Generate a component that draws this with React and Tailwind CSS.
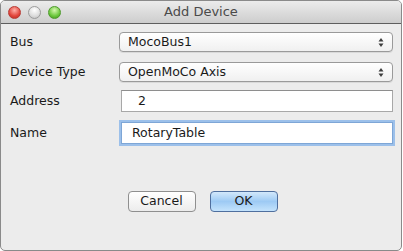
import React from "react";

function Light({ className }) {
    return (
        <div className={"h-[13px] w-[13px] rounded-full border " + className}></div>
    );
}

function Combo({ value }) {
    return (
        <div className="relative flex h-[20px] w-[274px] items-center rounded-[4px] border border-[#9a9a9a] bg-gradient-to-b from-white to-[#f0f0f0] pl-[8px] shadow-[0_1px_0_rgba(0,0,0,0.08)]">
            <span className="text-[12.5px] text-[#1a1a1a]">{value}</span>
            <svg className="absolute right-[8px] top-[4px]" width="6" height="11" viewBox="0 0 6 11">
                <path d="M3 1 L5.5 4.5 L0.5 4.5 Z" fill="#3c3c3c" />
                <path d="M3 10 L5.5 6.5 L0.5 6.5 Z" fill="#3c3c3c" />
            </svg>
        </div>
    );
}

export default function App() {
    return (
        <div className="h-[251px] w-[403px] bg-white" style={{ fontFamily: '"DejaVu Sans", "Liberation Sans", sans-serif' }}>
            <div className="flex h-[251px] w-[402px] flex-col overflow-hidden rounded-[5px] border border-[#8a8a8a] bg-[#ececec]">
                {/* title bar */}
                <div className="relative flex h-[23px] shrink-0 items-center border-b border-[#5e5e5e] bg-gradient-to-b from-[#ececec] to-[#cdcdcd]">
                    <div className="flex items-center gap-[7px] pl-[7px]">
                        <Light className="border-[#b83a33] bg-[radial-gradient(circle_at_50%_30%,#ffb0a8,#e2453b_60%,#b32a22)]" />
                        <Light className="border-[#9c9c9c] bg-[radial-gradient(circle_at_50%_30%,#ffffff,#dcdcdc_60%,#b8b8b8)]" />
                        <Light className="border-[#4c9a2a] bg-[radial-gradient(circle_at_50%_30%,#d6f7b0,#6cc83d_60%,#3f8f1c)]" />
                    </div>
                    <div className="absolute inset-0 flex items-center justify-center text-[13px] text-[#4a4a4a]">
                        Add Device
                    </div>
                </div>

                {/* form */}
                <div className="flex flex-col pl-[9px] pt-[8px] text-[12.5px] text-[#1a1a1a]">
                    <div className="flex items-center">
                        <div className="w-[109px]">Bus</div>
                        <Combo value="MocoBus1" />
                    </div>
                    <div className="mt-[10px] flex items-center">
                        <div className="w-[109px]">Device Type</div>
                        <Combo value="OpenMoCo Axis" />
                    </div>
                    <div className="mt-[8px] flex items-center">
                        <div className="w-[111px]">Address</div>
                        <div className="flex h-[22px] w-[272px] items-center border border-[#a8a8a8] border-t-[#8e8e8e] bg-white pl-[16px]">
                            2
                        </div>
                    </div>
                    <div className="mt-[10px] flex items-center">
                        <div className="w-[111px]">Name</div>
                        <div className="flex h-[22px] w-[272px] items-center border border-[#7ea6d6] bg-white pl-[10px] shadow-[0_0_0_2px_#9cc0ea]">
                            RotaryTable
                        </div>
                    </div>
                </div>

                {/* buttons */}
                <div className="mt-[47px] flex justify-center gap-[14px] pl-[3px] text-[12.5px] text-[#1a1a1a]">
                    <div className="flex h-[21px] w-[68px] items-center justify-center rounded-[4px] border border-[#8f8f8f] bg-gradient-to-b from-white to-[#ececec]">
                        Cancel
                    </div>
                    <div className="flex h-[21px] w-[68px] items-center justify-center rounded-[4px] border border-[#4f6f9e] bg-gradient-to-b from-[#d2e8fb] via-[#9dcaf4] to-[#c4e3fc]">
                        OK
                    </div>
                </div>
            </div>
        </div>
    );
}
